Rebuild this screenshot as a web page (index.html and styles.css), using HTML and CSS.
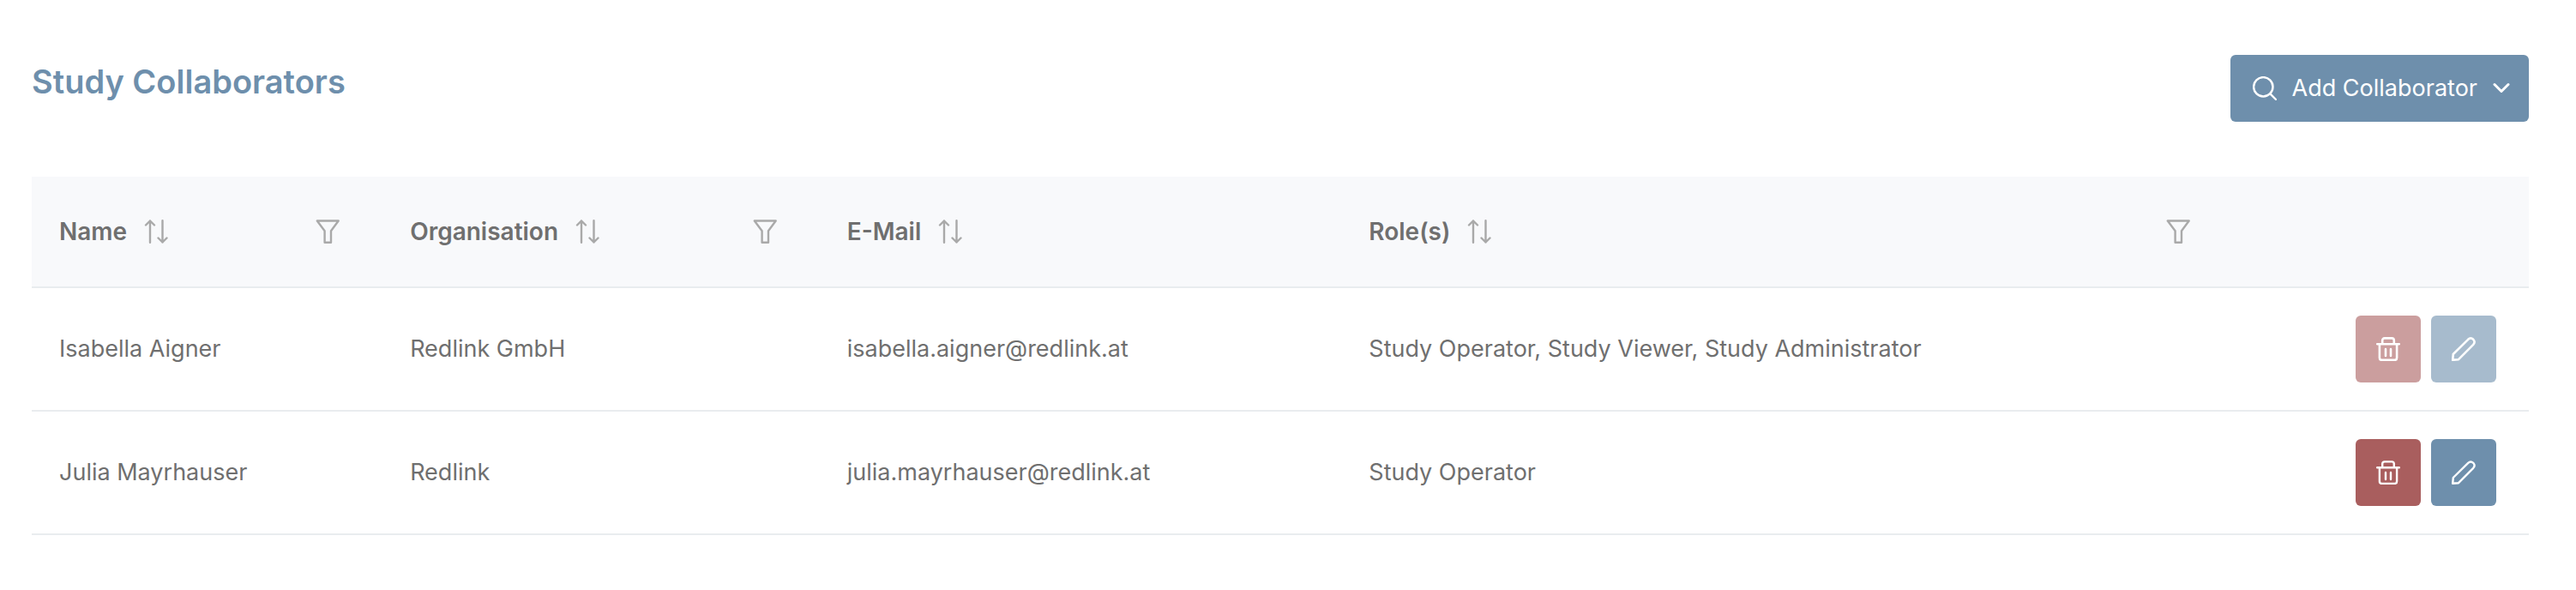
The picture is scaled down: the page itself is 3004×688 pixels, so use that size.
FILE: index.html
```
<!DOCTYPE html>
<html lang="en">
<head>
<meta charset="utf-8">
<title>Study Collaborators</title>
<link rel="stylesheet" href="styles.css">
</head>
<body>
<svg class="sprite" aria-hidden="true">
  <symbol id="sort" viewBox="0 0 28 28"><path d="M7 26.8V1.5M2 6.5L7 1.5L12 6.5M21.5 1.2V26.5M16.5 21.5L21.5 26.5L26.5 21.5"/></symbol>
  <symbol id="filter" viewBox="0 0 28 28"><path d="M1.8 1.5H26.7L18 13.2V26.8H10.6V13.2Z"/></symbol>
  <symbol id="search" viewBox="0 0 28 28"><circle cx="12.3" cy="12.3" r="11.2"/><path d="M20.4 20.4L27 27"/></symbol>
  <symbol id="chevron" viewBox="0 0 20 20"><path d="M2 5.5L10 13.5L18 5.5"/></symbol>
  <symbol id="trash" viewBox="0 0 28 28"><path d="M1.2 8.2H26.8M7.2 8V4Q7.2 1.4 9.8 1.4H18.2Q20.8 1.4 20.8 4V8M3.9 8.2V24.2Q3.9 26.9 6.6 26.9H21.4Q24.1 26.9 24.1 24.2V8.2M11 14V22M17 14V22"/></symbol>
  <symbol id="pencil" viewBox="0 0 28 28"><path d="M1.2 26.8L1.8 20L19.2 2.8Q22.2 0 25.2 2.8Q28 5.8 25.2 8.8L8 26.2Z"/></symbol>
</svg>
<main class="page">
  <header class="toolbar">
    <h1 class="title">Study Collaborators</h1>
    <button class="add" type="button">
      <svg class="icon"><use href="#search"/></svg>
      <span>Add Collaborator</span>
      <svg class="icon icon-chevron"><use href="#chevron"/></svg>
    </button>
  </header>
  <table class="table">
    <colgroup><col class="col-name"><col class="col-org"><col class="col-mail"><col class="col-roles"><col></colgroup>
    <thead>
      <tr>
        <th scope="col"><div class="head"><button class="sort" type="button">Name <svg class="icon"><use href="#sort"/></svg></button><button class="filter" type="button" aria-label="Filter by name"><svg class="icon"><use href="#filter"/></svg></button></div></th>
        <th scope="col"><div class="head"><button class="sort" type="button">Organisation <svg class="icon"><use href="#sort"/></svg></button><button class="filter" type="button" aria-label="Filter by organisation"><svg class="icon"><use href="#filter"/></svg></button></div></th>
        <th scope="col"><div class="head"><button class="sort" type="button">E-Mail <svg class="icon"><use href="#sort"/></svg></button></div></th>
        <th scope="col"><div class="head"><button class="sort" type="button">Role(s) <svg class="icon"><use href="#sort"/></svg></button><button class="filter" type="button" aria-label="Filter by role"><svg class="icon"><use href="#filter"/></svg></button></div></th>
        <th scope="col" aria-label="Actions"></th>
      </tr>
    </thead>
    <tbody>
      <tr>
        <td>Isabella Aigner</td>
        <td>Redlink GmbH</td>
        <td>isabella.aigner@redlink.at</td>
        <td>Study Operator, Study Viewer, Study Administrator</td>
        <td><div class="actions"><button class="action danger" type="button" aria-label="Delete" disabled><svg class="icon"><use href="#trash"/></svg></button><button class="action" type="button" aria-label="Edit" disabled><svg class="icon"><use href="#pencil"/></svg></button></div></td>
      </tr>
      <tr>
        <td>Julia Mayrhauser</td>
        <td>Redlink</td>
        <td>julia.mayrhauser@redlink.at</td>
        <td>Study Operator</td>
        <td><div class="actions"><button class="action danger" type="button" aria-label="Delete"><svg class="icon"><use href="#trash"/></svg></button><button class="action" type="button" aria-label="Edit"><svg class="icon"><use href="#pencil"/></svg></button></div></td>
      </tr>
    </tbody>
  </table>
</main>
</body>
</html>
```
FILE: styles.css
```
* { box-sizing: border-box; }

body {
  margin: 0;
  background: #fff;
  color: #6f6f6f;
  font: 400 27px/40px Inter, "Liberation Sans", sans-serif;
}

button {
  margin: 0;
  padding: 0;
  border: 0;
  background: none;
  color: inherit;
  font: inherit;
}

.sprite { position: absolute; width: 0; height: 0; }

.icon {
  flex: none;
  width: 28px;
  height: 28px;
  fill: none;
  stroke: currentColor;
  stroke-width: 2.4;
  stroke-linecap: round;
  stroke-linejoin: round;
}

.page { padding: 64px 55px 64px 37px; }

.toolbar {
  display: flex;
  justify-content: space-between;
  align-items: flex-start;
  margin-bottom: 64px;
}

.title {
  margin: 0;
  padding-top: 7px;
  color: #6e8fac;
  font-size: 38px;
  font-weight: 600;
  line-height: 48px;
}

.add {
  display: flex;
  align-items: center;
  gap: 18px;
  height: 78px;
  padding: 0 22px 0 26px;
  border-radius: 6px;
  background: #6e8fac;
  color: #fff;
}

.icon-chevron { width: 20px; height: 20px; stroke-width: 3; }

.table {
  width: 100%;
  table-layout: fixed;
  border-collapse: separate;
  border-spacing: 0;
}

.col-name { width: 14.05%; }
.col-org { width: 17.5%; }
.col-mail { width: 20.9%; }
.col-roles { width: 35.7%; }

th, td {
  padding: 32px;
  border-bottom: 2px solid #e9ecef;
  text-align: left;
}

th { background: #f8f9fb; font-size: 28px; font-weight: 600; }

.head {
  display: flex;
  justify-content: space-between;
  align-items: center;
  height: 64px;
}

.sort { display: flex; align-items: center; gap: 20px; }
.head .icon { color: #a9a9a9; }

.filter {
  display: grid;
  place-items: center;
  width: 64px;
  height: 64px;
}

.actions { display: flex; justify-content: flex-end; gap: 12px; padding-right: 6px; }

.action {
  display: grid;
  place-items: center;
  width: 76px;
  height: 78px;
  border-radius: 6px;
  background: #6e8fac;
  color: #fff;
}

.danger { background: #a95e5e; }
.action:disabled { opacity: 0.6; }
.action:disabled .icon { stroke-width: 2.6; }
```
